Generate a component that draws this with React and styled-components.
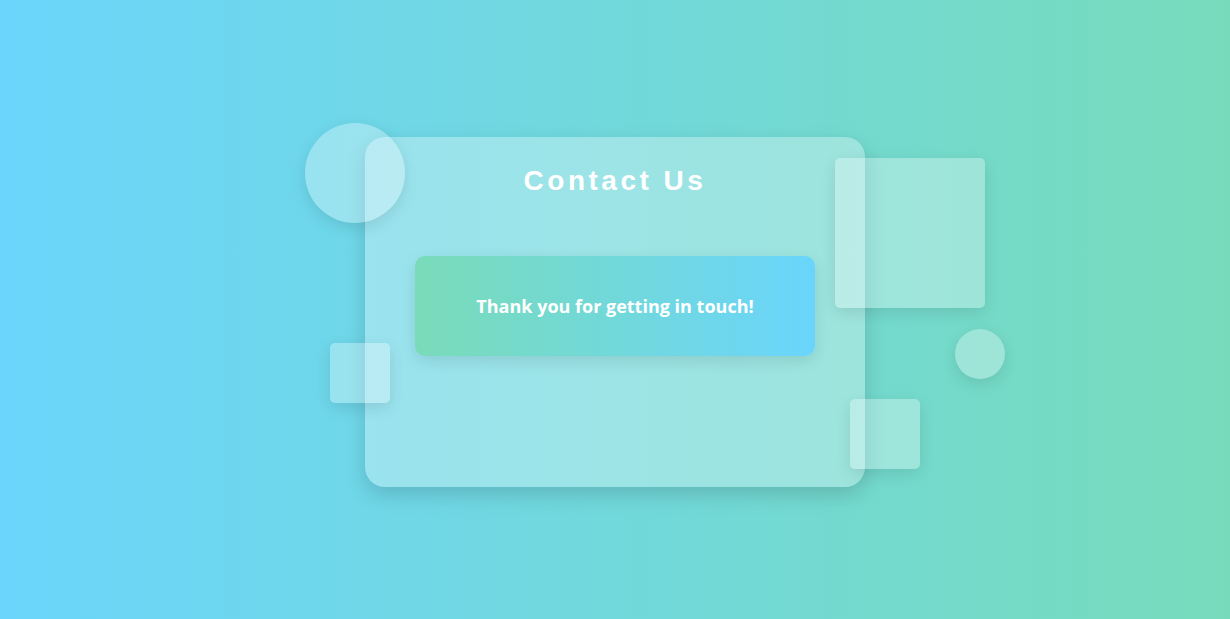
import styled, { createGlobalStyle } from "styled-components"

const GlobalStyle = createGlobalStyle`
    * {
        box-sizing: border-box;
    }

    body {
        margin: 0;
        font-family: "Liberation Sans", Arial, sans-serif;
    }
`

const ScStage = styled.main`
    height: 100vh;
    padding-top: 4px;
    display: flex;
    justify-content: center;
    align-items: center;
    background: linear-gradient(to right, #6bd5fb, #77dbbb);
    overflow: hidden;
`

const ScCard = styled.section`
    position: relative;
    width: 500px;
    height: 350px;
    padding: 28px 50px 0;
    border-radius: 20px;
    background: rgba(255, 255, 255, .3);
    box-shadow: 0 8px 20px rgba(0, 0, 0, .15);

    h2 {
        margin: 0;
        text-align: center;
        font-size: 28px;
        font-weight: 700;
        letter-spacing: 3.5px;
        color: #fff;
    }
`

const ScMessage = styled.div`
    margin-top: 59px;
    height: 100px;
    display: flex;
    justify-content: center;
    align-items: center;
    border-radius: 10px;
    background: linear-gradient(to right, #79dbb8, #6ad5fc);
    box-shadow: 0 5px 15px rgba(0, 0, 0, .1);
    color: #fff;
    font-family: "Open Sans", "Noto Sans", sans-serif;
    font-weight: 700;
    font-size: 18px;
`

const ScShape = styled.span`
    position: absolute;
    left: ${p => p.$x}px;
    top: ${p => p.$y}px;
    width: ${p => p.$size}px;
    height: ${p => p.$size}px;
    border-radius: ${p => p.$round ? "50%" : "5px"};
    background: rgba(255, 255, 255, .3);
    box-shadow: 0 5px 15px rgba(0, 0, 0, .1);
`

const shapes = [
    { x: -60, y: -14, size: 100, round: true },
    { x: 470, y: 21, size: 150 },
    { x: -35, y: 206, size: 60 },
    { x: 590, y: 192, size: 50, round: true },
    { x: 485, y: 262, size: 70 },
]

function App() {
    return (
        <>
            <GlobalStyle />
            <ScStage>
                <ScCard>
                    <h2>Contact Us</h2>
                    <ScMessage>Thank you for getting in touch!</ScMessage>
                    {shapes.map((s, i) =>
                        <ScShape key={i} $x={s.x} $y={s.y} $size={s.size} $round={s.round} />,
                    )}
                </ScCard>
            </ScStage>
        </>
    )
}

export default App
